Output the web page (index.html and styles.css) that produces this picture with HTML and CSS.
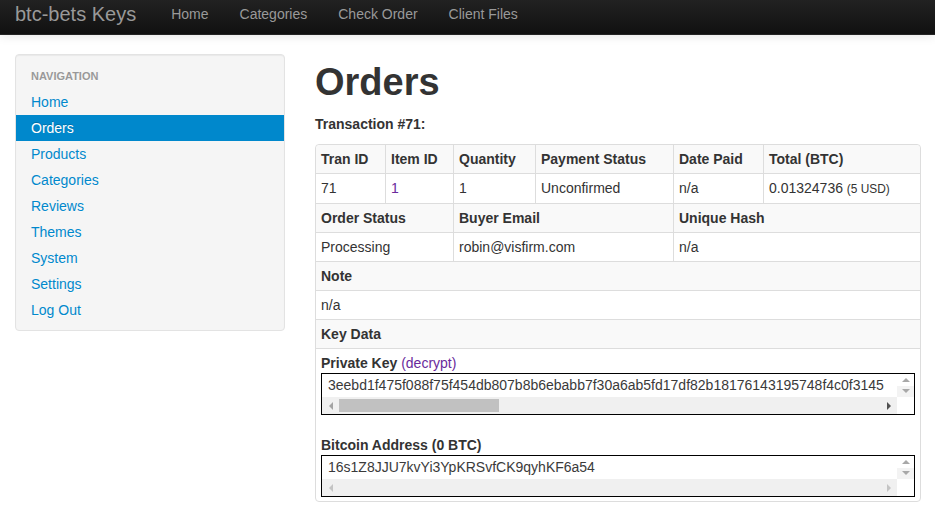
FILE: index.html
```html
<!DOCTYPE html>
<html lang="en">
<head>
<meta charset="utf-8">
<title>Orders - btc-bets Keys</title>
<link rel="stylesheet" href="styles.css">
</head>
<body>
<header class="navbar">
  <a class="brand" href="#">btc-bets Keys</a>
  <nav class="topnav">
    <a href="#">Home</a>
    <a href="#">Categories</a>
    <a href="#">Check Order</a>
    <a href="#">Client Files</a>
  </nav>
</header>
<div class="layout">
  <aside class="well">
    <ul class="navlist">
      <li class="nav-header">Navigation</li>
      <li><a href="#">Home</a></li>
      <li class="active"><a href="#">Orders</a></li>
      <li><a href="#">Products</a></li>
      <li><a href="#">Categories</a></li>
      <li><a href="#">Reviews</a></li>
      <li><a href="#">Themes</a></li>
      <li><a href="#">System</a></li>
      <li><a href="#">Settings</a></li>
      <li><a href="#">Log Out</a></li>
    </ul>
  </aside>
  <main class="content">
    <h1>Orders</h1>
    <p class="tx">Transaction #71:</p>
    <table class="order">
      <tbody>
        <tr>
          <th class="w1">Tran ID</th>
          <th class="w2">Item ID</th>
          <th class="w3">Quantity</th>
          <th class="w4">Payment Status</th>
          <th class="w5">Date Paid</th>
          <th class="w6">Total (BTC)</th>
        </tr>
        <tr>
          <td>71</td>
          <td><a class="visited" href="#">1</a></td>
          <td>1</td>
          <td>Unconfirmed</td>
          <td>n/a</td>
          <td>0.01324736 <small>(5 USD)</small></td>
        </tr>
        <tr>
          <th colspan="2">Order Status</th>
          <th colspan="2">Buyer Email</th>
          <th colspan="2">Unique Hash</th>
        </tr>
        <tr>
          <td colspan="2">Processing</td>
          <td colspan="2">robin@visfirm.com</td>
          <td colspan="2">n/a</td>
        </tr>
        <tr>
          <th colspan="6">Note</th>
        </tr>
        <tr>
          <td colspan="6">n/a</td>
        </tr>
        <tr>
          <th colspan="6">Key Data</th>
        </tr>
        <tr>
          <td colspan="6" class="keycell">
            <div class="keylabel"><b>Private Key</b> <a class="visited" href="#">(decrypt)</a></div>
            <div class="keybox first">
              <div class="keytext">3eebd1f475f088f75f454db807b8b6ebabb7f30a6ab5fd17df82b18176143195748f4c0f3145</div>
              <div class="vbar"><span class="btn up"><i class="arr-u"></i></span><span class="btn down"><i class="arr-d"></i></span></div>
              <div class="hbar">
                <span class="hbtn"><i class="arr-l"></i></span>
                <span class="thumb"></span>
                <span class="hspace"></span>
                <span class="hbtn"><i class="arr-r dark"></i></span>
              </div>
              <div class="corner"></div>
            </div>
            <div class="keylabel"><b>Bitcoin Address (0 BTC)</b></div>
            <div class="keybox">
              <div class="keytext">16s1Z8JJU7kvYi3YpKRSvfCK9qyhKF6a54</div>
              <div class="vbar"><span class="btn up"><i class="arr-u"></i></span><span class="btn down"><i class="arr-d"></i></span></div>
              <div class="hbar">
                <span class="hbtn"><i class="arr-l light"></i></span>
                <span class="hspace"></span>
                <span class="hbtn"><i class="arr-r light"></i></span>
              </div>
              <div class="corner"></div>
            </div>
          </td>
        </tr>
      </tbody>
    </table>
  </main>
</div>
</body>
</html>
```
FILE: styles.css
```css
* { box-sizing: border-box; }

body {
  margin: 0;
  font-family: "Liberation Sans", Arial, sans-serif;
  font-size: 14px;
  line-height: 20px;
  color: #333;
  background: #fff;
}

/* top navbar */
.navbar {
  display: flex;
  align-items: flex-start;
  height: 35px;
  padding-top: 4px;
  background: linear-gradient(#222222, #111111);
  border-bottom: 1px solid #252525;
  box-shadow: 0 1px 10px rgba(0, 0, 0, 0.1);
}
.brand {
  padding: 0 20px 0 15px;
  font-size: 20px;
  line-height: 20px;
  color: #999;
  text-decoration: none;
}
.topnav {
  display: flex;
}
.topnav a {
  padding: 0 15px;
  color: #999;
  text-decoration: none;
  line-height: 20px;
}
.topnav a + a {
  margin-left: 1px;
}

/* page layout */
.layout {
  display: grid;
  grid-template-columns: 270px 606px;
  column-gap: 30px;
  align-items: start;
  padding: 19px 0 0 15px;
}

/* sidebar */
.well {
  background: #f5f5f5;
  border: 1px solid #e3e3e3;
  border-radius: 4px;
  box-shadow: inset 0 1px 1px rgba(0, 0, 0, 0.05);
  padding: 8px 0 7px;
}
.navlist {
  list-style: none;
  margin: 0;
  padding: 0;
}
.nav-header {
  padding: 3px 15px;
  font-size: 11px;
  font-weight: bold;
  line-height: 20px;
  color: #999;
  text-transform: uppercase;
  text-shadow: 0 1px 0 rgba(255, 255, 255, 0.5);
}
.navlist a {
  display: block;
  padding: 3px 15px;
  color: #0088cc;
  text-decoration: none;
  text-shadow: 0 1px 0 rgba(255, 255, 255, 0.5);
}
.navlist .active a {
  background: #0088cc;
  color: #fff;
  text-shadow: 0 -1px 0 rgba(0, 0, 0, 0.2);
}

/* main */
.content h1 {
  margin: 8px 0 12px;
  font-size: 38px;
  line-height: 40px;
  font-weight: bold;
  color: #333;
}
.tx {
  margin: 0 0 10px;
  font-weight: bold;
}

.order {
  width: 606px;
  table-layout: fixed;
  border-collapse: separate;
  border-spacing: 0;
  border: 1px solid #ddd;
  border-radius: 4px;
}
.order th,
.order td {
  padding: 4px 5px;
  line-height: 20px;
  text-align: left;
  vertical-align: top;
  border-left: 1px solid #ddd;
  border-top: 1px solid #ddd;
}
.order th { font-weight: bold; }
.order tr > :first-child { border-left: 0; }
.order tr:first-child > * { border-top: 0; }
.order tr:nth-child(odd) > * { background: #f9f9f9; }
.order tr:first-child > :first-child { border-top-left-radius: 4px; }
.order tr:first-child > :last-child { border-top-right-radius: 4px; }
.order tr:last-child > :first-child { border-bottom-left-radius: 4px; border-bottom-right-radius: 4px; }

.w1 { width: 69px; }
.w2 { width: 68px; }
.w3 { width: 82px; }
.w4 { width: 138px; }
.w5 { width: 90px; }
.w6 { width: 157px; }

.order small { font-size: 85%; }

a.visited {
  color: #6a2a9c;
  text-decoration: none;
}

/* key boxes (fake textareas) */
.keylabel {
  line-height: 20px;
}
.keybox {
  display: grid;
  grid-template-columns: 1fr 17px;
  grid-template-rows: 23px 17px;
  border: 1px solid #000;
  background: #fff;
}
.keybox.first {
  margin-bottom: 20px;
}
.keytext {
  padding: 0 6px;
  line-height: 23px;
  white-space: nowrap;
  overflow: hidden;
  color: #3a3a3a;
}
.vbar {
  display: flex;
  flex-direction: column;
}
.vbar .btn {
  flex: 1;
  display: flex;
  align-items: center;
  justify-content: center;
}
.vbar .down {
  background: #f3f3f3;
}
.hbar {
  display: flex;
  background: #f0f0f0;
}
.hbtn {
  width: 17px;
  flex: none;
  display: flex;
  align-items: center;
  justify-content: center;
}
.thumb {
  width: 160px;
  flex: none;
  margin: 2px 0 2px;
  background: #c1c1c1;
}
.hspace { flex: 1; }
.corner { background: #fff; }

.arr-l, .arr-r, .arr-u, .arr-d {
  display: block;
  width: 0;
  height: 0;
}
.arr-l {
  border-top: 4px solid transparent;
  border-bottom: 4px solid transparent;
  border-right: 4px solid #a3a3a3;
}
.arr-r {
  border-top: 4px solid transparent;
  border-bottom: 4px solid transparent;
  border-left: 4px solid #a3a3a3;
}
.arr-r.dark { border-left-color: #505050; }
.arr-l.light { border-right-color: #c4c4c4; }
.arr-r.light { border-left-color: #c4c4c4; }
.arr-u {
  border-left: 4px solid transparent;
  border-right: 4px solid transparent;
  border-bottom: 4px solid #a8a8a8;
}
.arr-d {
  border-left: 4px solid transparent;
  border-right: 4px solid transparent;
  border-top: 4px solid #a8a8a8;
}
```
